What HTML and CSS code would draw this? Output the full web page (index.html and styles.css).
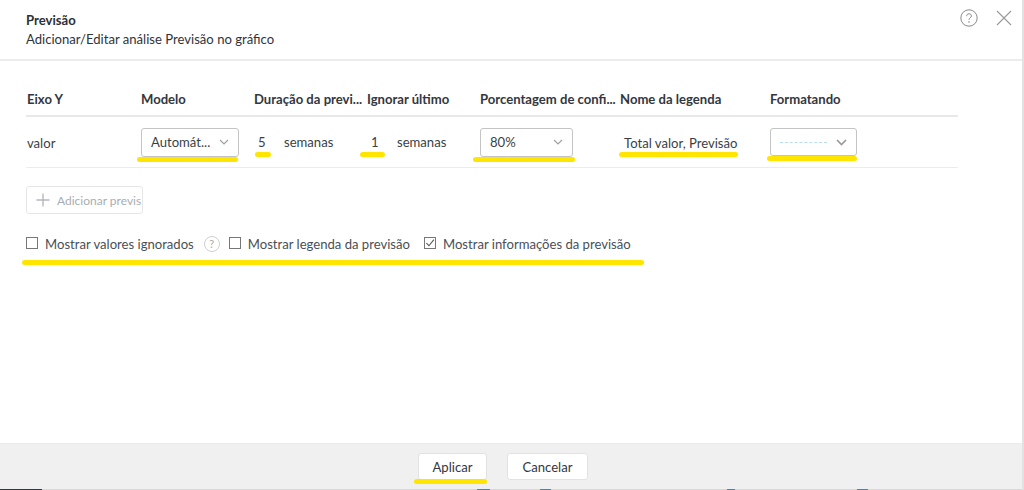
FILE: index.html
```html
<!DOCTYPE html>
<html lang="pt">
<head>
<meta charset="utf-8">
<title>Previsão</title>
<link rel="stylesheet" href="styles.css">
</head>
<body>
<div class="dialog">
  <header class="head">
    <div class="titles">
      <h1>Previsão</h1>
      <p>Adicionar/Editar análise Previsão no gráfico</p>
    </div>
    <div class="head-icons">
      <svg class="ico-help" width="18" height="18" viewBox="0 0 18 18"><circle cx="9" cy="9" r="8.2" fill="none" stroke="#8a8a8a" stroke-width="1"/><path d="M6.6 7.2c0-1.5 1-2.4 2.4-2.4s2.4.9 2.4 2.2c0 1.8-2.4 1.9-2.4 3.8" fill="none" stroke="#8a8a8a" stroke-width="1"/><circle cx="9" cy="13" r=".8" fill="#8a8a8a"/></svg>
      <svg class="ico-close" width="16" height="16" viewBox="0 0 16 16"><path d="M1 1l14 14M15 1L1 15" stroke="#999" stroke-width="1.1" fill="none"/></svg>
    </div>
  </header>

  <main class="body">
    <div class="grid grid-head">
      <div>Eixo Y</div>
      <div>Modelo</div>
      <div>Duração da previ...</div>
      <div>Ignorar último</div>
      <div>Porcentagem de confi...</div>
      <div>Nome da legenda</div>
      <div>Formatando</div>
    </div>
    <div class="grid grid-row">
      <div class="axis">valor</div>
      <div><div class="select sel-model mark">Automát...<svg class="chev" width="10" height="6" viewBox="0 0 10 6"><path d="M1 1l4 4 4-4" fill="none" stroke="#a0a0a0" stroke-width="1.2"/></svg></div></div>
      <div class="dur"><span class="num num-five mark">5</span><span>semanas</span></div>
      <div class="dur"><span class="num num-one mark">1</span><span>semanas</span></div>
      <div><div class="select sel-conf mark">80%<svg class="chev" width="10" height="6" viewBox="0 0 10 6"><path d="M1 1l4 4 4-4" fill="none" stroke="#a0a0a0" stroke-width="1.2"/></svg></div></div>
      <div><span class="legend mark">Total valor, Previsão</span></div>
      <div><div class="select sel-fmt mark"><span class="dash"></span><svg class="chev" width="11" height="7" viewBox="0 0 11 7"><path d="M1 1l4.5 4.5L10 1" fill="none" stroke="#9a9a9a" stroke-width="1.7"/></svg></div></div>
    </div>

    <div class="add"><svg class="plus" width="14" height="14" viewBox="0 0 14 14"><path d="M7 0.5v13M0.5 7h13" stroke="#b4b8be" stroke-width="1.4" fill="none"/></svg><span class="add-label">Adicionar previs</span></div>

    <div class="options mark">
      <label class="opt"><span class="box"></span>Mostrar valores ignorados</label>
      <span class="hint">?</span>
      <label class="opt"><span class="box"></span>Mostrar legenda da previsão</label>
      <label class="opt"><span class="box"><svg width="11" height="10" viewBox="0 0 11 10"><path d="M1.5 5l2.8 3L9.8 1.2" fill="none" stroke="#555" stroke-width="1.2"/></svg></span>Mostrar informações da previsão</label>
    </div>
  </main>

  <footer class="foot">
    <button class="btn btn-apply mark" type="button">Aplicar</button>
    <button class="btn btn-cancel" type="button">Cancelar</button>
  </footer>
</div>
</body>
</html>
```
FILE: styles.css
```css
* { box-sizing: border-box; }
html, body { margin: 0; height: 100%; }
body {
  font-family: Lato, "Open Sans", sans-serif;
  font-size: 13.1px;
  color: #3a3f47;
  background: #fff;
  overflow: hidden;
}
.dialog {
  position: relative;
  height: 490px;
  display: flex;
  flex-direction: column;
  border-right: 2px solid #e2e2e2;
}
.head {
  height: 61px;
  flex: none;
  display: flex;
  justify-content: space-between;
  padding: 12px 10px 0 26px;
  border-bottom: 2px solid #ececec;
}
.head h1 { margin: 0; font-size: 13.1px; line-height: 16px; font-weight: 700; color: #2b2f36; }
.head p { margin: 3px 0 0; font-size: 13.1px; line-height: 16px; color: #2f333a; }
.head-icons { display: flex; gap: 18px; align-items: flex-start; margin-top: -3px; }
.ico-close { margin-top: 1px; }

.body { flex: 1; padding: 0 0 0 26px; }
.grid {
  display: grid;
  width: 932px;
  grid-template-columns: 114px 113px 113px 113px 140px 150px 1fr;
  padding-left: 1px;
}
.grid-head {
  height: 56px;
  padding-top: 30px;
  line-height: 16px;
  font-weight: 700;
  color: #33373e;
  border-bottom: 2px solid #e8e8e8;
  white-space: nowrap;
}
.grid-row {
  height: 51px;
  align-items: center;
  border-bottom: 1px solid #ececec;
}
.axis { padding-top: 1px; }
.mark { position: relative; }
.mark::after {
  content: "";
  position: absolute;
  height: 5px;
  border-radius: 3px;
  background: #ffe500;
}
.select {
  position: relative;
  height: 29px;
  border: 1px solid #c4c4c4;
  border-radius: 3px;
  background: #fff;
  display: flex;
  align-items: center;
  justify-content: space-between;
  padding: 0 9px;
}
.sel-model { width: 98px; }
.sel-conf { width: 93px; }
.sel-fmt { width: 87px; height: 28px; }
.chev { flex: none; }
.dash { width: 47px; border-top: 1px dashed #bcdcf5; margin-top: 1px; }
.sel-model::after { left: -5px; right: 0; bottom: -6px; }
.sel-conf::after { left: -8px; right: -3px; bottom: -6px; }
.sel-fmt::after { left: -4px; right: -1px; bottom: -6px; }
.dur { display: flex; align-items: center; }
.num { width: 30px; padding-left: 4px; }
.num-five::after { left: 1px; width: 16px; bottom: -7px; }
.num-one::after { left: -7px; width: 25px; bottom: -7px; }
.legend { margin-left: 4px; display: inline-block; padding-top: 2px; }
.legend::after { left: -5px; right: -1px; bottom: -6px; }

.add {
  margin-top: 18px;
  width: 117px;
  height: 28px;
  border: 1px solid #e6e6e6;
  border-radius: 3px;
  display: flex;
  align-items: center;
  padding-left: 9px;
  overflow: hidden;
  white-space: nowrap;
  color: #a9adb3;
  font-size: 12px;
}
.plus { flex: none; margin-right: 7px; }
.options {
  margin-top: 22px;
  display: flex;
  align-items: center;
  height: 16px;
  width: 612px;
  color: #4a4f57;
}
.options::after { left: -4px; width: 622px; bottom: -13px; }
.opt { display: flex; align-items: center; white-space: nowrap; }
.box {
  width: 12px;
  height: 12px;
  border: 1px solid #777;
  margin-right: 7px;
  flex: none;
  display: flex;
  align-items: center;
  justify-content: center;
  margin-top: -2px;
}
.hint {
  width: 16px;
  height: 16px;
  margin: 0 9px 0 10px;
  border: 1px solid #cfcfcf;
  border-radius: 50%;
  font-size: 11px;
  line-height: 14px;
  text-align: center;
  color: #aaa;
  flex: none;
}
.opt:last-child { margin-left: 14px; }

.foot {
  position: relative;
  flex: none;
  height: 47px;
  background: #f0f0f1;
  border-top: 1px solid #ececec;
  display: flex;
  justify-content: center;
  gap: 20px;
  padding: 9px 16px 0 0;
}
.foot::before {
  content: "";
  position: absolute;
  left: 0;
  right: 0;
  bottom: 0;
  height: 1px;
  background: linear-gradient(to right,
    #2f3a42 0 42px, #d8d8d8 42px 477px, #2f8fc4 477px 490px, #d8d8d8 490px 540px,
    #2f8fc4 540px 551px, #d8d8d8 551px 727px, #2f8fc4 727px 735px, #d8d8d8 735px 857px,
    #2f8fc4 857px 868px, #d8d8d8 868px);
}
.btn {
  height: 27px;
  border: 1px solid #e2e2e2;
  border-radius: 3px;
  background: #fff;
  font: 13.1px Lato, sans-serif;
  color: #33373e;
  padding: 0;
}
.btn-apply { width: 69px; }
.btn-cancel { width: 81px; }
.btn-apply::after { left: -5px; right: -1px; bottom: -5px; }
```
